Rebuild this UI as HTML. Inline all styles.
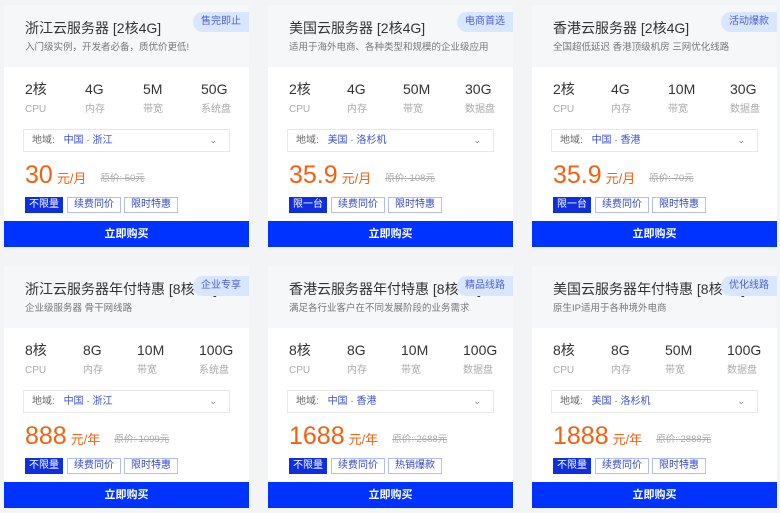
<!DOCTYPE html>
<html><head><meta charset="utf-8"><style>
*{margin:0;padding:0;box-sizing:border-box}
body{width:780px;height:513px;background:#f3f4f6;font-family:"Liberation Sans","Noto Sans CJK SC",sans-serif;position:relative;overflow:hidden}
.card{position:absolute;width:245px;height:242px;background:#fff;overflow:hidden}
.hd{position:absolute;left:0;top:0;width:100%;height:62px;background:#f6f7f9}
.t{position:absolute;left:21px;top:14px;font-size:14px;line-height:18px;color:#333;white-space:nowrap}
.s{position:absolute;left:21px;top:37px;font-size:9.5px;line-height:12px;color:#777;white-space:nowrap}
.b{position:absolute;right:0;top:7px;height:20px;line-height:20px;padding:0 8px;background:#d9e6ff;color:#4a5fd9;font-size:10px;border-radius:10px 0 0 10px;z-index:2}
.r2 .b{top:10px}
.sp{position:absolute;top:75px;font-size:14px;line-height:18px;height:18px;color:#333}
.sl{position:absolute;top:98px;font-size:10px;line-height:13px;height:13px;color:#aaa}
.dd{position:absolute;left:19px;top:124px;width:207px;height:23px;border:1px solid #e8e8e8;font-size:10px;line-height:21px;padding-left:8px;color:#666}
.dd b{font-weight:normal;color:#3b4fd6;margin-left:6px}
.dd i{position:absolute;right:12px;top:0;font-style:normal;color:#888;font-size:9px}
.pr{position:absolute;left:21px;top:155px;font-size:25px;line-height:30px;color:#f5600f;white-space:nowrap}
.pr small{font-size:13px;margin-left:4px}
.pr s{font-size:9.5px;color:#aaa;margin-left:14px;vertical-align:2px}
.tg{position:absolute;top:192px;height:16px;line-height:14px;font-size:10px;border:1px solid #b3bdf5;color:#3346c9;padding:0 6px}
.tg.f{background:#0d2fe0;color:#fff;border-color:#0d2fe0;padding:0 3px}
.btn{position:absolute;left:0;bottom:0;width:100%;height:26px;background:#0033ff;color:#fff;font-size:11px;font-weight:bold;text-align:center;line-height:26px}
</style></head><body>

<div class="card" style="left:4px;top:5px"><div class="hd"></div>
<div class="t">浙江云服务器 [2核4G]</div><div class="s">入门级实例，开发者必备，质优价更低!</div><div class="b">售完即止</div>
<div class="sp" style="left:21px">2核</div><div class="sp" style="left:81px">4G</div><div class="sp" style="left:139px">5M</div><div class="sp" style="left:197px">50G</div>
<div class="sl" style="left:21px">CPU</div><div class="sl" style="left:81px">内存</div><div class="sl" style="left:139px">带宽</div><div class="sl" style="left:197px">系统盘</div>
<div class="dd">地域: <b>中国 · 浙江</b><i>⌄</i></div>
<div class="pr">30<small>元/月</small><s>原价: 50元</s></div>
<div class="tg f" style="left:21px">不限量</div><div class="tg" style="left:63px">续费同价</div><div class="tg" style="left:120px">限时特惠</div>
<div class="btn">立即购买</div></div>

<div class="card" style="left:268px;top:5px"><div class="hd"></div>
<div class="t">美国云服务器 [2核4G]</div><div class="s">适用于海外电商、各种类型和规模的企业级应用</div><div class="b">电商首选</div>
<div class="sp" style="left:21px">2核</div><div class="sp" style="left:79px">4G</div><div class="sp" style="left:135px">50M</div><div class="sp" style="left:197px">30G</div>
<div class="sl" style="left:21px">CPU</div><div class="sl" style="left:79px">内存</div><div class="sl" style="left:135px">带宽</div><div class="sl" style="left:197px">数据盘</div>
<div class="dd">地域: <b>美国 · 洛杉机</b><i>⌄</i></div>
<div class="pr">35.9<small>元/月</small><s>原价: 108元</s></div>
<div class="tg f" style="left:21px">限一台</div><div class="tg" style="left:63px">续费同价</div><div class="tg" style="left:120px">限时特惠</div>
<div class="btn">立即购买</div></div>

<div class="card" style="left:532px;top:5px"><div class="hd"></div>
<div class="t">香港云服务器 [2核4G]</div><div class="s">全国超低延迟 香港顶级机房 三网优化线路</div><div class="b">活动爆款</div>
<div class="sp" style="left:21px">2核</div><div class="sp" style="left:79px">4G</div><div class="sp" style="left:136px">10M</div><div class="sp" style="left:198px">30G</div>
<div class="sl" style="left:21px">CPU</div><div class="sl" style="left:79px">内存</div><div class="sl" style="left:136px">带宽</div><div class="sl" style="left:198px">数据盘</div>
<div class="dd">地域: <b>中国 · 香港</b><i>⌄</i></div>
<div class="pr">35.9<small>元/月</small><s>原价: 70元</s></div>
<div class="tg f" style="left:21px">限一台</div><div class="tg" style="left:63px">续费同价</div><div class="tg" style="left:120px">限时特惠</div>
<div class="btn">立即购买</div></div>

<div class="card r2" style="left:4px;top:266px"><div class="hd"></div>
<div class="t">浙江云服务器年付特惠 [8核8G]</div><div class="s">企业级服务器 骨干网线路</div><div class="b">企业专享</div>
<div class="sp" style="left:21px">8核</div><div class="sp" style="left:79px">8G</div><div class="sp" style="left:133px">10M</div><div class="sp" style="left:195px">100G</div>
<div class="sl" style="left:21px">CPU</div><div class="sl" style="left:79px">内存</div><div class="sl" style="left:133px">带宽</div><div class="sl" style="left:195px">系统盘</div>
<div class="dd">地域: <b>中国 · 浙江</b><i>⌄</i></div>
<div class="pr">888<small>元/年</small><s>原价: 1099元</s></div>
<div class="tg f" style="left:21px">不限量</div><div class="tg" style="left:63px">续费同价</div><div class="tg" style="left:120px">限时特惠</div>
<div class="btn">立即购买</div></div>

<div class="card r2" style="left:268px;top:266px"><div class="hd"></div>
<div class="t">香港云服务器年付特惠 [8核8G]</div><div class="s">满足各行业客户在不同发展阶段的业务需求</div><div class="b">精品线路</div>
<div class="sp" style="left:21px">8核</div><div class="sp" style="left:79px">8G</div><div class="sp" style="left:133px">10M</div><div class="sp" style="left:195px">100G</div>
<div class="sl" style="left:21px">CPU</div><div class="sl" style="left:79px">内存</div><div class="sl" style="left:133px">带宽</div><div class="sl" style="left:195px">数据盘</div>
<div class="dd">地域: <b>中国 · 香港</b><i>⌄</i></div>
<div class="pr">1688<small>元/年</small><s>原价: 2688元</s></div>
<div class="tg f" style="left:21px">不限量</div><div class="tg" style="left:63px">续费同价</div><div class="tg" style="left:120px">热销爆款</div>
<div class="btn">立即购买</div></div>

<div class="card r2" style="left:532px;top:266px"><div class="hd"></div>
<div class="t">美国云服务器年付特惠 [8核8G]</div><div class="s">原生IP适用于各种境外电商</div><div class="b">优化线路</div>
<div class="sp" style="left:21px">8核</div><div class="sp" style="left:79px">8G</div><div class="sp" style="left:133px">50M</div><div class="sp" style="left:195px">100G</div>
<div class="sl" style="left:21px">CPU</div><div class="sl" style="left:79px">内存</div><div class="sl" style="left:133px">带宽</div><div class="sl" style="left:195px">数据盘</div>
<div class="dd">地域: <b>美国 · 洛杉机</b><i>⌄</i></div>
<div class="pr">1888<small>元/年</small><s>原价: 2888元</s></div>
<div class="tg f" style="left:21px">不限量</div><div class="tg" style="left:63px">续费同价</div><div class="tg" style="left:120px">限时特惠</div>
<div class="btn">立即购买</div></div>

</body></html>
